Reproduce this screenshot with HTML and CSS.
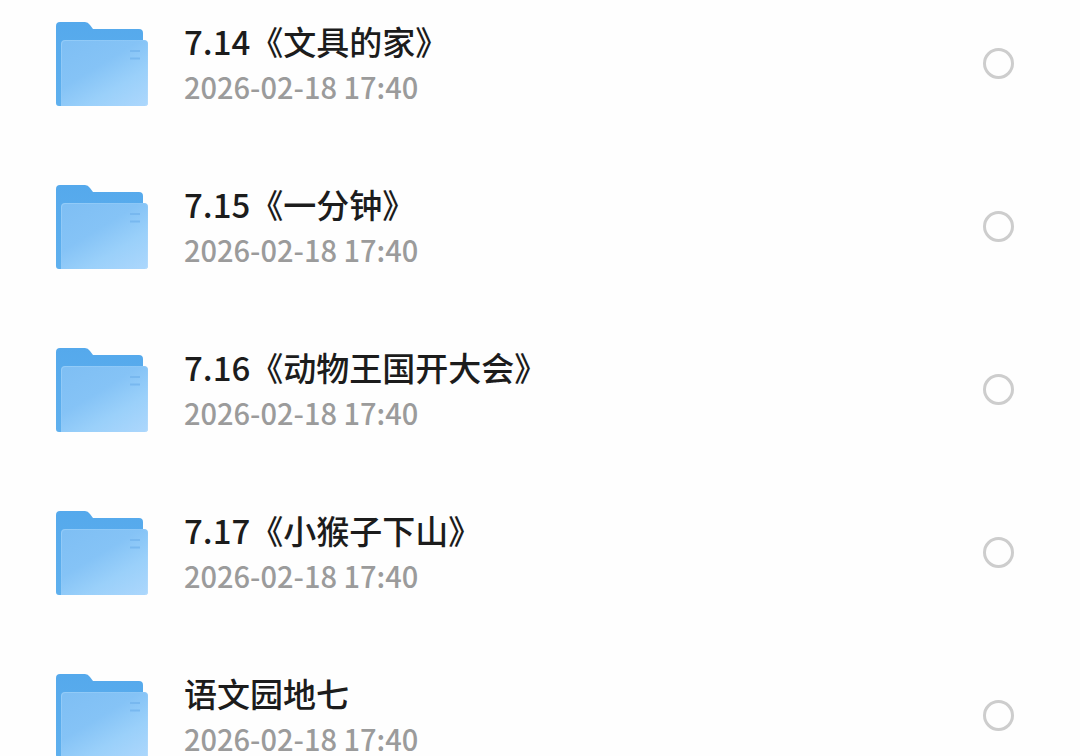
FILE: index.html
```html
<!DOCTYPE html>
<html lang="zh-CN">
<head>
<meta charset="utf-8">
<meta name="viewport" content="width=device-width, initial-scale=1">
<title>文件夹</title>
<link rel="stylesheet" href="styles.css">
</head>
<body>
<svg class="defs" width="0" height="0" aria-hidden="true">
  <defs>
    <linearGradient id="back" x1="0" y1="0" x2="0" y2="1">
      <stop offset="0" stop-color="#55a9ec"/>
      <stop offset="1" stop-color="#5fb0ee"/>
    </linearGradient>
    <linearGradient id="front" x1="0.1" y1="0" x2="0.9" y2="1">
      <stop offset="0" stop-color="#7fbff4"/>
      <stop offset="0.4" stop-color="#85c3f6"/>
      <stop offset="0.7" stop-color="#9ad0fa"/>
      <stop offset="1" stop-color="#aad6fc"/>
    </linearGradient>
    <linearGradient id="edge" x1="0" y1="0" x2="1" y2="1">
      <stop offset="0" stop-color="#94ccf8"/>
      <stop offset="0.5" stop-color="#94ccf8" stop-opacity="0.4"/>
      <stop offset="1" stop-color="#b6dcfc"/>
    </linearGradient>
    <symbol id="folder" viewBox="0 0 93 84">
      <path fill="url(#back)" d="M4 0H29Q32 0 34 3L37 7H83Q87 7 87 11V78H10V84H3Q0 84 0 81V4Q0 0 4 0Z"/>
      <path fill="url(#front)" d="M9 18H88Q92 18 92 22V81Q92 84 89 84H5V22Q5 18 9 18Z"/>
      <path fill="none" stroke="url(#edge)" d="M5.500 84V22Q5.500 18.500 9 18.500H88Q91.500 18.500 91.500 22V81Q91.500 83.500 89 83.500"/>
      <path stroke="#78b8ef" stroke-width="2" d="M74 29H84M74 36.500H84"/>
    </symbol>
  </defs>
</svg>
<main>
  <ul class="list">
    <li><label class="row">
      <svg class="folder" aria-hidden="true"><use href="#folder"/></svg>
      <span class="info"><span class="name">7.14《文具的家》</span><time class="date">2026-02-18 17:40</time></span>
      <input class="check" type="checkbox">
    </label></li>
    <li><label class="row">
      <svg class="folder" aria-hidden="true"><use href="#folder"/></svg>
      <span class="info"><span class="name">7.15《一分钟》</span><time class="date">2026-02-18 17:40</time></span>
      <input class="check" type="checkbox">
    </label></li>
    <li><label class="row">
      <svg class="folder" aria-hidden="true"><use href="#folder"/></svg>
      <span class="info"><span class="name">7.16《动物王国开大会》</span><time class="date">2026-02-18 17:40</time></span>
      <input class="check" type="checkbox">
    </label></li>
    <li><label class="row">
      <svg class="folder" aria-hidden="true"><use href="#folder"/></svg>
      <span class="info"><span class="name">7.17《小猴子下山》</span><time class="date">2026-02-18 17:40</time></span>
      <input class="check" type="checkbox">
    </label></li>
    <li><label class="row">
      <svg class="folder" aria-hidden="true"><use href="#folder"/></svg>
      <span class="info"><span class="name">语文园地七</span><time class="date">2026-02-18 17:40</time></span>
      <input class="check" type="checkbox">
    </label></li>
  </ul>
</main>
</body>
</html>
```
FILE: styles.css
```css
body {
  margin: 0;
  background: #fefefe;
  color: #1c1c1c;
  font-family: "Noto Sans CJK SC", sans-serif;
  overflow-x: hidden;
  scrollbar-width: none;
}

.defs {
  display: block;
}

.list {
  display: flex;
  flex-direction: column;
  gap: 73px;
  margin: 0;
  padding: 18px 66px 18px 56px;
  list-style: none;
}

.row {
  display: flex;
  align-items: center;
  gap: 35px;
}

.folder {
  flex: none;
  width: 93px;
  height: 84px;
  margin-top: 2px;
}

.info {
  display: flex;
  flex: 1;
  flex-direction: column;
  min-width: 0;
}

.name {
  font-size: 33px;
  font-weight: 500;
  line-height: 46px;
}

.date {
  color: #9b9b9b;
  font-size: 29px;
  font-weight: 500;
  line-height: 44px;
}

.check {
  appearance: none;
  flex: none;
  box-sizing: border-box;
  width: 31px;
  height: 31px;
  margin: 0;
  border: 3px solid #cdcdcd;
  border-radius: 50%;
}

.check:checked {
  border-color: #55a9ec;
  background: #55a9ec;
}
```
